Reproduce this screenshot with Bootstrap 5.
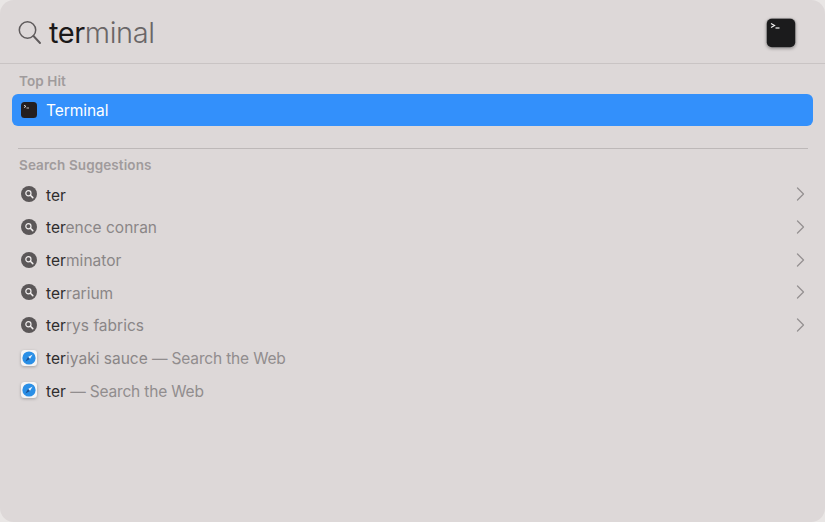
<!DOCTYPE html>
<html lang="en">
<head>
    <meta charset="UTF-8">
    <meta name="viewport" content="width=device-width, initial-scale=1.0">
    <title>Spotlight</title>
    <link href="https://cdn.jsdelivr.net/npm/bootstrap@5.3.3/dist/css/bootstrap.min.css" rel="stylesheet">
    <style>
        html, body { height: 100%; }
        body { background: #e9e6e5; overflow: hidden; font-family: Inter, "Liberation Sans", sans-serif; }
        .spot-window { height: 522px; background: #ddd8d8; border-radius: 14px; }
        .spot-head { height: 64px; padding: 2px 28px 0 18px; border-bottom: 1px solid #c9c4c4; }
        .spot-query { font-size: 29px; font-weight: 300; color: #6a6667; letter-spacing: -.42px; margin-left: 8px; line-height: 1; }
        .spot-query b { font-weight: 400; color: #1a1819; }
        .spot-label { font-size: 13.5px; font-weight: 600; color: #a09b9c; line-height: 16px; padding-left: 19px; letter-spacing: .1px; }
        .label-top { margin-top: 9px; margin-bottom: 5px; }
        .label-suggest { margin-top: 8px; margin-bottom: 5px; }
        .spot-hit { height: 32px; margin: 0 12px; padding-left: 9px; background: #3390fb; border-radius: 6px; color: #fff; font-size: 15.5px; letter-spacing: -.05px; }
        .spot-rule { height: 1px; background: #bdb8b8; margin: 22px 17px 0 18px; }
        .spot-row { height: 32.7px; padding: 0 20px 0 21px; font-size: 15.5px; color: #8a8687; letter-spacing: 0; }
        .spot-row b { font-weight: 400; color: #2f2c2d; }
        .spot-row .spot-web { color: #918d8e; letter-spacing: -.17px; }
        .spot-name { margin-left: 9px; margin-top: 2px; line-height: 1; }
        .spot-ico { flex: 0 0 16px; width: 16px; height: 16px; display: block; }
        .spot-ico-app { filter: drop-shadow(0 1px 1.5px rgba(0, 0, 0, .25)); }
        .spot-ico-lg { flex: 0 0 32px; width: 32px; height: 32px; display: block; filter: drop-shadow(0 1px 1.5px rgba(0, 0, 0, .3)); }
    </style>
</head>
<body>
    <div class="spot-window d-flex flex-column">
        <!-- Search field -->
        <div class="spot-head d-flex align-items-center flex-shrink-0">
            <svg width="23" height="25" viewBox="0 0 23 25" fill="none" stroke="#5f5b5c" stroke-width="1.5" stroke-linecap="round">
                <circle cx="9.5" cy="10" r="8.2"/>
                <path d="M15.5 16l6.5 7" stroke-width="1.9"/>
            </svg>
            <div class="spot-query"><b>ter</b>minal</div>
            <svg class="spot-ico-lg ms-auto" viewBox="0 0 32 32">
                <rect x="1" y="1" width="30" height="30" rx="6" fill="#a9a6a6"/>
                <rect x="1.8" y="1.8" width="28.4" height="28.4" rx="5" fill="#1b1b1c"/>
                <path d="M6 6.5l3.5 2-3.5 2" fill="none" stroke="#f2f2f2" stroke-width="1.2"/>
                <path d="M10.5 11h4" stroke="#e8e8e8" stroke-width="1.3"/>
            </svg>
        </div>

        <div class="spot-label label-top">Top Hit</div>
        <div class="spot-hit d-flex align-items-center">
            <svg class="spot-ico" viewBox="0 0 16 16">
                <rect x="0" y="0" width="16" height="16" rx="3.5" fill="#241f20"/>
                <path d="M3 3.2l2 1.2-2 1.2" fill="none" stroke="#f2f2f2" stroke-width=".8"/>
                <path d="M5.5 6h2.5" stroke="#e8e8e8" stroke-width=".8"/>
            </svg>
            <span class="spot-name">Terminal</span>
        </div>

        <div class="spot-rule"></div>
        <div class="spot-label label-suggest">Search Suggestions</div>

        <div id="suggestions"></div>
    </div>

    <script>
        // Rows of the suggestion list
        const rows = [
            { bold: "ter", rest: "", kind: "search" },
            { bold: "ter", rest: "ence conran", kind: "search" },
            { bold: "ter", rest: "minator", kind: "search" },
            { bold: "ter", rest: "rarium", kind: "search" },
            { bold: "ter", rest: "rys fabrics", kind: "search" },
            { bold: "ter", rest: "iyaki sauce", kind: "web" },
            { bold: "ter", rest: "", kind: "web" }
        ];

        const searchIcon = `<svg class="spot-ico" viewBox="0 0 16 16">
            <circle cx="8" cy="8" r="8" fill="#5b5758"/>
            <circle cx="7.4" cy="7.2" r="2.6" fill="none" stroke="#f1eeee" stroke-width="1.2"/>
            <path d="M9.4 9.2l2.4 2.4" stroke="#f1eeee" stroke-width="1.5" stroke-linecap="round"/>
        </svg>`;

        const safariIcon = `<svg class="spot-ico spot-ico-app" viewBox="0 0 16 16">
            <rect width="16" height="16" rx="3.5" fill="#f6f5f5"/>
            <circle cx="8" cy="8" r="6.6" fill="#2b8fe6"/>
            <path d="M11.6 4.4L8.9 8.9 7.1 7.1z" fill="#eef4fb"/>
            <path d="M4.4 11.6L7.1 7.1 8.9 8.9z" fill="#1c4f8f"/>
        </svg>`;

        const chevron = `<svg class="ms-auto" width="9" height="14" viewBox="0 0 9 14" fill="none" stroke="#959192" stroke-width="1.3" stroke-linecap="round" stroke-linejoin="round">
            <path d="M1.5 1l6 6-6 6"/>
        </svg>`;

        document.getElementById("suggestions").innerHTML = rows.map(function (row) {
            const web = row.kind === "web";
            return `<div class="spot-row d-flex align-items-center">
                ${web ? safariIcon : searchIcon}
                <span class="spot-name"><b>${row.bold}</b>${row.rest}${web ? ' <span class="spot-web">\u2014 Search the Web</span>' : ""}</span>
                ${web ? "" : chevron}
            </div>`;
        }).join("");
    </script>
    <script src="https://cdn.jsdelivr.net/npm/bootstrap@5.3.3/dist/js/bootstrap.bundle.min.js"></script>
</body>
</html>
